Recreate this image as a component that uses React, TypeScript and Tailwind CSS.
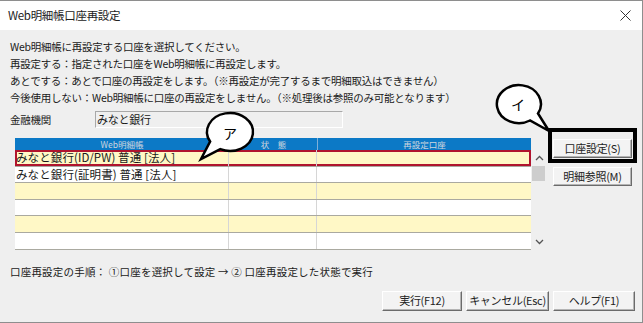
import React from 'react';

const jp = "font-['Noto_Sans_CJK_JP','Noto_Sans',sans-serif]";

type Row = { name: string; bg: string; selected?: boolean };

const rows: Row[] = [
  { name: 'みなと銀行(ID/PW) 普通 [法人]', bg: 'bg-[#fff8c6]', selected: true },
  { name: 'みなと銀行(証明書) 普通 [法人]', bg: 'bg-white' },
  { name: '', bg: 'bg-[#fff8c6]' },
  { name: '', bg: 'bg-white' },
  { name: '', bg: 'bg-[#fff8c6]' },
  { name: '', bg: 'bg-white' },
];

const Btn = ({ label, w, h = 'h-[20px]' }: { label: string; w: string; h?: string }) => (
  <button
    className={`${w} ${h} flex items-center justify-center bg-[#f3f3f3] border border-t-white border-l-white border-r-[#6b6b6b] border-b-[#6b6b6b] shadow-[inset_-1px_-1px_0_#b4b4b4] text-[11px] leading-none text-[#222] tracking-[-0.3px]`}
  >
    {label}
  </button>
);

export default function App() {
  return (
    <div className={`relative w-[643px] h-[323px] bg-[#efefef] ${jp} text-[#1a1a1a] border-t border-r border-b border-[#8e8e8e] overflow-hidden flex flex-col`}>
      {/* title bar */}
      <div className="h-[29px] shrink-0 bg-white flex items-center justify-between pl-[8px] pr-[10px]">
        <span className="text-[11.5px] tracking-[-0.3px] text-[#222]">Web明細帳口座再設定</span>
        <svg width="11" height="11" viewBox="0 0 11 11" className="mr-[1px]">
          <path d="M0.5 0.5L10.5 10.5M10.5 0.5L0.5 10.5" stroke="#333" strokeWidth="1" />
        </svg>
      </div>

      {/* body */}
      <div className="flex-1 flex flex-col pl-[10px] pt-[8px] text-[10.5px] tracking-[-0.25px]">
        <div className="h-[17px] leading-[17px]">Web明細帳に再設定する口座を選択してください。</div>
        <div className="h-[17px] leading-[17px]">再設定する：指定された口座をWeb明細帳に再設定します。</div>
        <div className="h-[17px] leading-[17px]">あとでする：あとで口座の再設定をします。（※再設定が完了するまで明細取込はできません）</div>
        <div className="h-[17px] leading-[17px]">今後使用しない：Web明細帳に口座の再設定をしません。（※処理後は参照のみ可能となります）</div>

        <div className="mt-[5px] flex items-center h-[17px]">
          <span className="w-[85px]">金融機関</span>
          <div className="w-[248px] h-[17px] border-t border-l border-[#a8a8a8] border-r border-b border-r-white border-b-white flex items-center pl-[1px] text-[11px]">
            みなと銀行
          </div>
        </div>

        {/* list + buttons */}
        <div className="mt-[10px] flex">
          <div className="ml-[5px] w-[516px] flex flex-col">
            <div className="h-[12px] bg-[#0c79c6] flex items-center text-[8.5px] leading-none text-[#cfd6de] tracking-normal">
              <div className="w-[214px] h-full flex items-center justify-center">Web明細帳</div>
              <div className="w-[88px] h-full flex items-center justify-center border-l border-[#7fb0d8]">状　態</div>
              <div className="flex-1 h-full flex items-center justify-center border-l border-[#7fb0d8]">再設定口座</div>
            </div>
            {rows.map((r, i) => (
              <div
                key={i}
                className={`h-[16.6px] flex ${r.bg} border-b border-[#aaa9a0] ${r.selected ? 'shadow-[inset_0_0_0_2px_#b0142e]' : ''}`}
              >
                <div className="w-[214px] border-r border-[#d6d6d6] pl-[1px] text-[11.5px] leading-[15px] tracking-[0.1px] whitespace-nowrap overflow-hidden flex items-center">
                  {r.name}
                </div>
                <div className="w-[88px] border-r border-[#d6d6d6]" />
                <div className="flex-1" />
              </div>
            ))}
          </div>

          {/* scrollbar */}
          <div className="w-[17px] mt-[12px] flex flex-col items-center">
            <svg width="9" height="6" viewBox="0 0 9 6" className="mt-[5px]">
              <path d="M1 5L4.5 1.5L8 5" stroke="#555" strokeWidth="1.3" fill="none" />
            </svg>
            <div className="mt-[5px] w-[13px] h-[15px] bg-[#cdcdcd] self-start ml-[1px]" />
            <div className="flex-1" />
            <svg width="9" height="6" viewBox="0 0 9 6" className="mb-[5px]">
              <path d="M1 1L4.5 4.5L8 1" stroke="#555" strokeWidth="1.3" fill="none" />
            </svg>
          </div>

          <div className="ml-[5px] mt-[1px] flex flex-col gap-[9px]">
            <Btn label="口座設定(S)" w="w-[79px]" h="h-[19px]" />
            <Btn label="明細参照(M)" w="w-[79px]" h="h-[19px]" />
          </div>
        </div>

        <div className="mt-[13px] h-[17px] leading-[17px] tracking-[0.2px]">口座再設定の手順：&nbsp;①口座を選択して設定 → ② 口座再設定した状態で実行</div>

        <div className="mt-[11px] flex justify-end pr-[7px] gap-[4px]">
          <Btn label="実行(F12)" w="w-[80px]" />
          <Btn label="キャンセル(Esc)" w="w-[83px]" />
          <Btn label="ヘルプ(F1)" w="w-[82px]" />
        </div>
      </div>

      {/* annotations */}
      <svg className="absolute inset-0 pointer-events-none" width="643" height="323" viewBox="0 0 643 323">
        <rect x="550" y="129" width="85" height="31" fill="none" stroke="#000" strokeWidth="4" />
        <path
          d="M220.3 148.2 A23 19 0 1 0 210.1 140.5 L201 158 Z"
          fill="#fff"
          stroke="#000"
          strokeWidth="2.5"
        />
        <text x="230" y="138" textAnchor="middle" fontSize="14" fontFamily="Noto Sans CJK JP, sans-serif" fill="#000">ア</text>
        <path
          d="M538 112.5 A22 19 0 1 0 530 119.5 L549 130 Z"
          fill="#fff"
          stroke="#000"
          strokeWidth="2.5"
        />
        <text x="518" y="109" textAnchor="middle" fontSize="14" fontFamily="Noto Sans CJK JP, sans-serif" fill="#000">イ</text>
      </svg>
    </div>
  );
}
